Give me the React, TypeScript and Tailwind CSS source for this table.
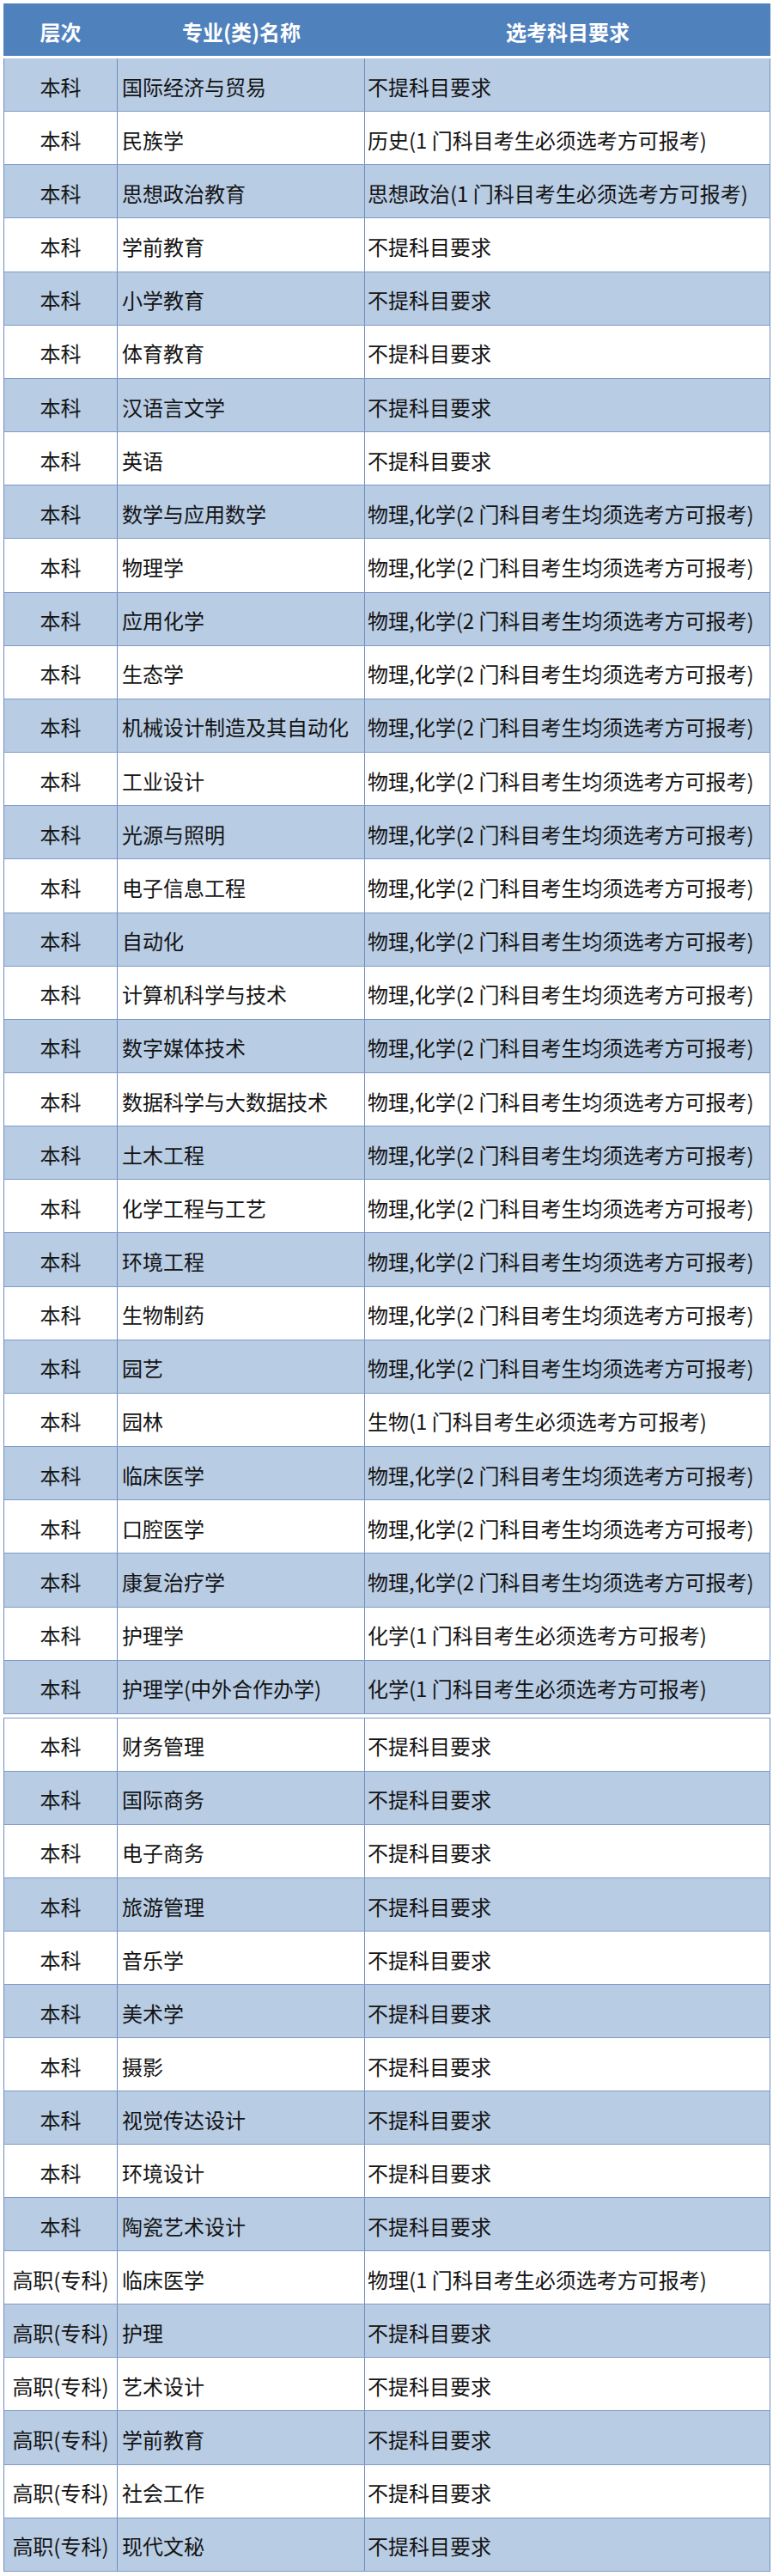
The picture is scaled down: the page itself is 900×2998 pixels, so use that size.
import React from "react";

const part1: [string, string, string][] = [
  ["本科", "国际经济与贸易", "不提科目要求"],
  ["本科", "民族学", "历史(1 门科目考生必须选考方可报考)"],
  ["本科", "思想政治教育", "思想政治(1 门科目考生必须选考方可报考)"],
  ["本科", "学前教育", "不提科目要求"],
  ["本科", "小学教育", "不提科目要求"],
  ["本科", "体育教育", "不提科目要求"],
  ["本科", "汉语言文学", "不提科目要求"],
  ["本科", "英语", "不提科目要求"],
  ["本科", "数学与应用数学", "物理,化学(2 门科目考生均须选考方可报考)"],
  ["本科", "物理学", "物理,化学(2 门科目考生均须选考方可报考)"],
  ["本科", "应用化学", "物理,化学(2 门科目考生均须选考方可报考)"],
  ["本科", "生态学", "物理,化学(2 门科目考生均须选考方可报考)"],
  ["本科", "机械设计制造及其自动化", "物理,化学(2 门科目考生均须选考方可报考)"],
  ["本科", "工业设计", "物理,化学(2 门科目考生均须选考方可报考)"],
  ["本科", "光源与照明", "物理,化学(2 门科目考生均须选考方可报考)"],
  ["本科", "电子信息工程", "物理,化学(2 门科目考生均须选考方可报考)"],
  ["本科", "自动化", "物理,化学(2 门科目考生均须选考方可报考)"],
  ["本科", "计算机科学与技术", "物理,化学(2 门科目考生均须选考方可报考)"],
  ["本科", "数字媒体技术", "物理,化学(2 门科目考生均须选考方可报考)"],
  ["本科", "数据科学与大数据技术", "物理,化学(2 门科目考生均须选考方可报考)"],
  ["本科", "土木工程", "物理,化学(2 门科目考生均须选考方可报考)"],
  ["本科", "化学工程与工艺", "物理,化学(2 门科目考生均须选考方可报考)"],
  ["本科", "环境工程", "物理,化学(2 门科目考生均须选考方可报考)"],
  ["本科", "生物制药", "物理,化学(2 门科目考生均须选考方可报考)"],
  ["本科", "园艺", "物理,化学(2 门科目考生均须选考方可报考)"],
  ["本科", "园林", "生物(1 门科目考生必须选考方可报考)"],
  ["本科", "临床医学", "物理,化学(2 门科目考生均须选考方可报考)"],
  ["本科", "口腔医学", "物理,化学(2 门科目考生均须选考方可报考)"],
  ["本科", "康复治疗学", "物理,化学(2 门科目考生均须选考方可报考)"],
  ["本科", "护理学", "化学(1 门科目考生必须选考方可报考)"],
  ["本科", "护理学(中外合作办学)", "化学(1 门科目考生必须选考方可报考)"],
];

const part2: [string, string, string][] = [
  ["本科", "财务管理", "不提科目要求"],
  ["本科", "国际商务", "不提科目要求"],
  ["本科", "电子商务", "不提科目要求"],
  ["本科", "旅游管理", "不提科目要求"],
  ["本科", "音乐学", "不提科目要求"],
  ["本科", "美术学", "不提科目要求"],
  ["本科", "摄影", "不提科目要求"],
  ["本科", "视觉传达设计", "不提科目要求"],
  ["本科", "环境设计", "不提科目要求"],
  ["本科", "陶瓷艺术设计", "不提科目要求"],
  ["高职(专科)", "临床医学", "物理(1 门科目考生必须选考方可报考)"],
  ["高职(专科)", "护理", "不提科目要求"],
  ["高职(专科)", "艺术设计", "不提科目要求"],
  ["高职(专科)", "学前教育", "不提科目要求"],
  ["高职(专科)", "社会工作", "不提科目要求"],
  ["高职(专科)", "现代文秘", "不提科目要求"],
];

function Row({ r, blue, h }: { r: [string, string, string]; blue: boolean; h: string }) {
  return (
    <div
      className={`grid grid-cols-[133px_288px_472px] border-b border-[#7f9bc6] text-[24px] leading-none text-[#141414] ${h} ${
        blue ? "bg-[#b8cce4]" : "bg-white"
      }`}
    >
      <div className="flex items-center justify-center border-l border-r border-[#6f8dbd] pt-[4px] whitespace-nowrap">
        {r[0]}
      </div>
      <div className="flex items-center border-r border-[#6f8dbd] pl-[5px] pt-[4px] whitespace-nowrap">{r[1]}</div>
      <div className="flex items-center border-r border-[#6f8dbd] pl-[3px] pt-[4px] whitespace-nowrap">
        {r[2]}
      </div>
    </div>
  );
}

export default function App() {
  return (
    <div
      className="min-h-[2998px] w-[900px] bg-white pl-[4px] pt-[4px]"
      style={{ fontFamily: '"Noto Sans CJK SC", "Noto Sans", sans-serif' }}
    >
      <div className="grid h-[61px] w-[893px] grid-cols-[133px_288px_472px] bg-[#4f81bd] text-[24px] font-bold leading-none text-white">
        <div className="flex items-center justify-center pt-[5px]">层次</div>
        <div className="flex items-center justify-center pt-[5px]">专业(类)名称</div>
        <div className="flex items-center justify-center pt-[5px]">选考科目要求</div>
      </div>
      <div className="mt-[3px] w-[893px]">
        {part1.map((r, i) => (
          <Row key={i} r={r} blue={i % 2 === 0} h="h-[62.16px]" />
        ))}
      </div>
      <div className="mt-[4px] w-[893px] border-t border-[#7f9bc6]">
        {part2.map((r, i) => (
          <Row key={i} r={r} blue={i % 2 === 1} h="h-[62.06px]" />
        ))}
      </div>
    </div>
  );
}
